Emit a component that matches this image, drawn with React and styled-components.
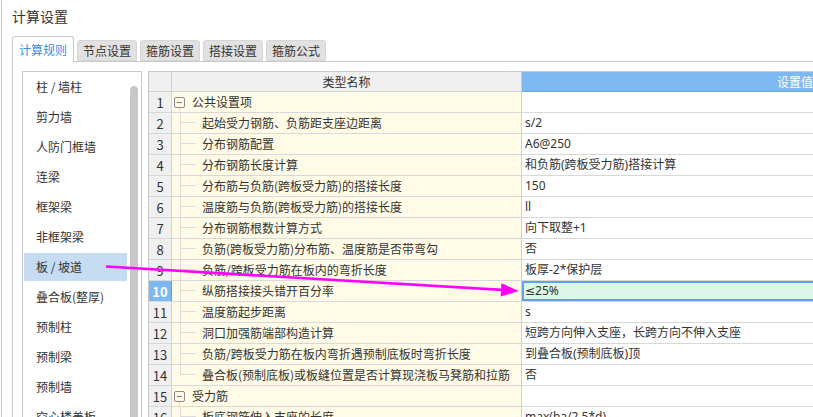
import styled, { createGlobalStyle } from "styled-components";

const TABS = ["计算规则", "节点设置", "箍筋设置", "搭接设置", "箍筋公式"];

const CATEGORIES = [
  "柱 / 墙柱",
  "剪力墙",
  "人防门框墙",
  "连梁",
  "框架梁",
  "非框架梁",
  "板 / 坡道",
  "叠合板(整厚)",
  "预制柱",
  "预制梁",
  "预制墙",
  "空心楼盖板",
];

const ROWS = [
  { name: "公共设置项", group: true },
  { name: "起始受力钢筋、负筋距支座边距离", value: "s/2" },
  { name: "分布钢筋配置", value: "A6@250" },
  { name: "分布钢筋长度计算", value: "和负筋(跨板受力筋)搭接计算" },
  { name: "分布筋与负筋(跨板受力筋)的搭接长度", value: "150" },
  { name: "温度筋与负筋(跨板受力筋)的搭接长度", value: "ll" },
  { name: "分布钢筋根数计算方式", value: "向下取整+1" },
  { name: "负筋(跨板受力筋)分布筋、温度筋是否带弯勾", value: "否" },
  { name: "负筋/跨板受力筋在板内的弯折长度", value: "板厚-2*保护层" },
  { name: "纵筋搭接接头错开百分率", value: "≤25%", active: true },
  { name: "温度筋起步距离", value: "s" },
  { name: "洞口加强筋端部构造计算", value: "短跨方向伸入支座，长跨方向不伸入支座" },
  { name: "负筋/跨板受力筋在板内弯折遇预制底板时弯折长度", value: "到叠合板(预制底板)顶" },
  { name: "叠合板(预制底板)或板缝位置是否计算现浇板马凳筋和拉筋", value: "否", last: true },
  { name: "受力筋", group: true },
  { name: "板底钢筋伸入支座的长度", value: "max(ha/2,5*d)" },
];

export default function App() {
  return (
    <Root>
      <GlobalStyle />
      <Frame>
        <Title>计算设置</Title>

        <TabArea>
          <TabBar>
            {TABS.map((tab, i) => (
              <Tab key={tab} $active={i === 0}>
                {tab}
              </Tab>
            ))}
          </TabBar>

          <Panel>
            <CategoryList>
              <Items>
                {CATEGORIES.map((c) => (
                  <Item key={c} $selected={c === "板 / 坡道"}>
                    {c}
                  </Item>
                ))}
              </Items>
              <ScrollTrack>
                <Thumb />
              </ScrollTrack>
            </CategoryList>

            <Grid>
              <HeaderRow>
                <HeadCell />
                <HeadCell>类型名称</HeadCell>
                <HeadCell $accent>设置值</HeadCell>
              </HeaderRow>

              {ROWS.map((row, i) => (
                <Row key={i}>
                  <NumCell $active={row.active}>{i + 1}</NumCell>
                  <NameCell>
                    {row.group ? (
                      <>
                        <Expander />
                        <GroupText>{row.name}</GroupText>
                      </>
                    ) : (
                      <>
                        <Branch $last={row.last} />
                        {row.name}
                      </>
                    )}
                  </NameCell>
                  <ValueCell $active={row.active}>{row.value}</ValueCell>
                </Row>
              ))}
            </Grid>
          </Panel>
        </TabArea>
      </Frame>

      <Overlay viewBox="0 0 813 417">
        <line
          x1="106"
          y1="266.5"
          x2="502"
          y2="289.9"
          stroke="#ff00ff"
          strokeWidth="2.6"
        />
        <polygon points="519,291 500.6,296.6 501.4,283.2" fill="#ff00ff" />
      </Overlay>
    </Root>
  );
}

const GlobalStyle = createGlobalStyle`
  html, body {
    margin: 0;
    padding: 0;
    background: #fff;
  }

  body {
    font-family: "Noto Sans CJK SC", "Noto Sans", sans-serif;
    font-size: 12px;
    color: #333;
  }
`;

const Root = styled.div`
  position: relative;
  width: 813px;
  height: 417px;
  overflow: hidden;
  background: #fff;
`;

const Frame = styled.div`
  height: 100%;
  margin-left: 1px;
  border-left: 1px solid #c9c9c9;
`;

const Title = styled.div`
  height: 36px;
  padding-left: 10px;
  line-height: 33px;
  font-size: 14px;
  color: #333;
`;

const TabArea = styled.div`
  margin-left: 10px;
`;

const TabBar = styled.div`
  display: flex;
  align-items: flex-end;
  height: 25px;
  border-bottom: 1px solid #c8c8c8;
`;

const Tab = styled.div`
  box-sizing: border-box;
  display: flex;
  align-items: center;
  justify-content: center;
  width: ${(p) => (p.$active ? "62px" : "60px")};
  height: ${(p) => (p.$active ? "26px" : "21px")};
  margin-left: ${(p) => (p.$active ? "0" : "3px")};
  margin-bottom: ${(p) => (p.$active ? "-1px" : "0")};
  padding-top: ${(p) => (p.$active ? "0" : "1px")};
  border: 1px solid ${(p) => (p.$active ? "#c8c8c8" : "#d6d6d6")};
  border-bottom: ${(p) => (p.$active ? "none" : "1px solid #d6d6d6")};
  border-radius: 3px 3px 0 0;
  background: ${(p) => (p.$active ? "#fff" : "#e1e1e1")};
  color: ${(p) => (p.$active ? "#3b8de0" : "#333")};
  font-size: 12px;
  line-height: 1;
`;

const Panel = styled.div`
  display: flex;
  align-items: flex-start;
  gap: 6px;
  height: 400px;
  padding: 9px 0 0 9px;
  border-left: 1px solid #c8c8c8;
`;

const CategoryList = styled.div`
  box-sizing: border-box;
  display: flex;
  flex: none;
  width: 120px;
  height: 420px;
  border: 1px solid #c9c9c9;
  background: #fff;
`;

const Items = styled.div`
  flex: 1;
`;

const Item = styled.div`
  height: 28px;
  margin: 0 2px 0 1px;
  padding-left: 12px;
  border-top: 1px solid transparent;
  border-bottom: 1px solid transparent;
  background-clip: padding-box;
  line-height: 28px;
  font-size: 12px;
  color: #333;
  white-space: nowrap;
  background-color: ${(p) => (p.$selected ? "#c5dcf2" : "transparent")};
`;

const ScrollTrack = styled.div`
  flex: none;
  width: 12px;
`;

const Thumb = styled.div`
  width: 8px;
  height: 400px;
  margin: 14px 0 0 1px;
  border-radius: 4px;
  background: #c7c7c7;
`;

const Grid = styled.div`
  flex: none;
  border-top: 1px solid #c8c8c8;
  border-left: 1px solid #c8c8c8;
  background: #fff;
`;

const Row = styled.div`
  display: grid;
  grid-template-columns: 23px 350px 547px;
  height: 21px;
`;

const HeaderRow = styled(Row)`
  height: 20px;
`;

const Cell = styled.div`
  box-sizing: border-box;
  display: flex;
  align-items: center;
  border-right: 1px solid #d0d0d0;
  border-bottom: 1px solid #d8d8d8;
  font-size: 12px;
  line-height: 1;
  white-space: nowrap;
  overflow: hidden;
`;

const HeadCell = styled(Cell)`
  justify-content: center;
  background: ${(p) => (p.$accent ? "#7fb9f2" : "#f0f0f0")};
  color: ${(p) => (p.$accent ? "#fff" : "#333")};
  border-bottom-color: ${(p) => (p.$accent ? "#6aa6e6" : "#d0d0d0")};
`;

const NumCell = styled(Cell)`
  justify-content: center;
  font-size: 13px;
  font-weight: ${(p) => (p.$active ? 700 : 400)};
  color: ${(p) => (p.$active ? "#fff" : "#333")};
  background: ${(p) => (p.$active ? "#7db8f2" : "#f0f0f0")};
  border-right-color: ${(p) => (p.$active ? "#5a9ee6" : "#d0d0d0")};
`;

const NameCell = styled(Cell)`
  align-items: stretch;
  background: #fffbe6;
  padding-left: 2px;
  line-height: 20px;
`;

const ValueCell = styled(Cell)`
  padding-left: 3px;
  font-family: "Noto Sans", "DejaVu Sans", "Noto Sans CJK SC", sans-serif;
  background: ${(p) => (p.$active ? "#ddf5e9" : "#fff")};
  box-shadow: ${(p) => (p.$active ? "inset 0 0 0 2px #5fa2e6" : "none")};
`;

const Expander = styled.span`
  position: relative;
  box-sizing: border-box;
  flex: none;
  align-self: center;
  width: 11px;
  height: 11px;
  border: 1px solid #8a8a8a;
  border-radius: 2px;
  background: linear-gradient(#777, #777) center / 5px 1px no-repeat;

  &::after {
    content: "";
    position: absolute;
    left: 4px;
    top: 10px;
    width: 1px;
    height: 6px;
    background: #dcdcdc;
  }
`;

const GroupText = styled.span`
  margin-left: 7px;
`;

const Branch = styled.span`
  flex: none;
  width: 28px;
  background-image: linear-gradient(#dcdcdc, #dcdcdc),
    linear-gradient(#dcdcdc, #dcdcdc);
  background-repeat: no-repeat;
  background-position: 6px -1px, 6px 9px;
  background-size: 1px ${(p) => (p.$last ? "11px" : "22px")}, 16px 1px;
`;

const Overlay = styled.svg`
  position: absolute;
  left: 0;
  top: 0;
  width: 813px;
  height: 417px;
  pointer-events: none;
`;
